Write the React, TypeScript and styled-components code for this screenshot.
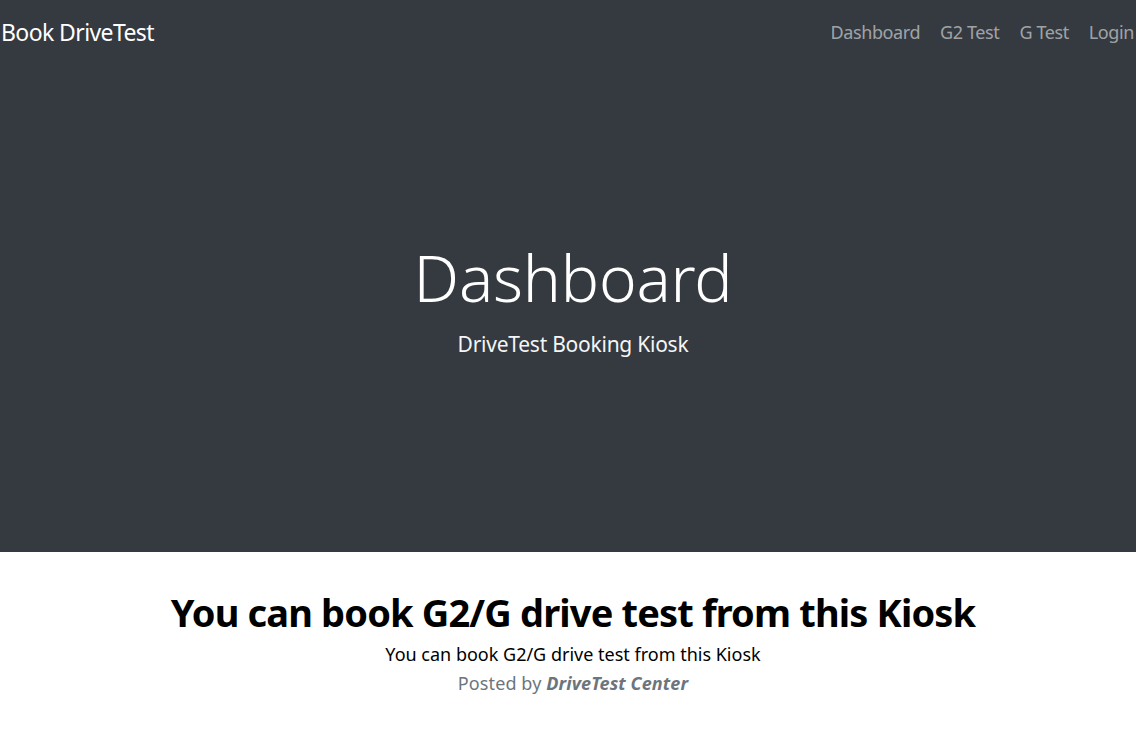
import React from 'react';
import styled, {createGlobalStyle} from 'styled-components';

const GlobalStyle = createGlobalStyle`
  html, body {
    margin: 0;
    padding: 0;
    background: #ffffff;
  }
  body {
    font-family: "Noto Sans", "Open Sans", sans-serif;
    color: #212529;
  }
`;

const navLinks = ['Dashboard', 'G2 Test', 'G Test', 'Login'];

const App: React.FC = () => {
    return (
        <>
            <GlobalStyle />
            <Masthead>
                <NavBar>
                    <Brand href="#">Book DriveTest</Brand>
                    <NavList>
                        {navLinks.map((link) => (
                            <NavItem key={link}>
                                <NavLink href="#">{link}</NavLink>
                            </NavItem>
                        ))}
                    </NavList>
                </NavBar>
                <Hero>
                    <HeroTitle>Dashboard</HeroTitle>
                    <HeroSubtitle>DriveTest Booking Kiosk</HeroSubtitle>
                </Hero>
            </Masthead>
            <Content>
                <PostTitle>You can book G2/G drive test from this Kiosk</PostTitle>
                <PostText>You can book G2/G drive test from this Kiosk</PostText>
                <PostMeta>
                    Posted by <Author>DriveTest Center</Author>
                </PostMeta>
            </Content>
        </>
    );
};

export default App;

const Masthead = styled.header`
  background-color: #343a40;
  height: 552px;
  display: flex;
  flex-direction: column;
`;

const NavBar = styled.nav`
  height: 64px;
  display: flex;
  align-items: center;
  justify-content: space-between;
  padding: 0 2px 0 1px;
`;

const Brand = styled.a`
  color: #ffffff;
  font-size: 23px;
  letter-spacing: -0.6px;
  text-decoration: none;
`;

const NavList = styled.ul`
  display: flex;
  gap: 20px;
  list-style: none;
  margin: 0;
  padding: 0;
`;

const NavItem = styled.li`
  display: block;
`;

const NavLink = styled.a`
  color: rgba(255, 255, 255, 0.55);
  font-size: 18px;
  letter-spacing: -0.4px;
  text-decoration: none;
`;

const Hero = styled.div`
  flex: 1;
  display: flex;
  flex-direction: column;
  align-items: center;
  padding: 176px 0 0 10px;
  color: #ffffff;
`;

const HeroTitle = styled.h1`
  margin: 0;
  font-size: 64px;
  font-weight: 300;
  letter-spacing: -0.2px;
  line-height: 1.2;
`;

const HeroSubtitle = styled.p`
  margin: 12px 0 0;
  font-size: 21px;
  letter-spacing: -0.25px;
  line-height: 1.5;
  color: #f4f5f6;
`;

const Content = styled.main`
  display: flex;
  flex-direction: column;
  align-items: center;
  padding: 38px 0 0 10px;
`;

const PostTitle = styled.h2`
  margin: 0;
  font-size: 38px;
  font-weight: 700;
  letter-spacing: -0.85px;
  line-height: 1.2;
  color: #000000;
`;

const PostText = styled.p`
  margin: 4px 0 0;
  font-size: 18px;
  line-height: 29px;
  color: #000000;
`;

const PostMeta = styled.p`
  margin: 0;
  font-size: 18px;
  letter-spacing: 0.1px;
  line-height: 29px;
  color: #6c757d;
`;

const Author = styled.strong`
  font-style: italic;
  font-weight: 700;
`;
